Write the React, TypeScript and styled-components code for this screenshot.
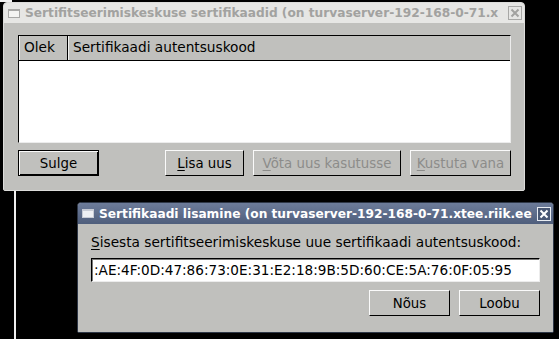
import React from "react";
import styled, { createGlobalStyle, css } from "styled-components";

const Global = createGlobalStyle`
  html, body { margin: 0; padding: 0; background: #000; }
  body { font-family: "DejaVu Sans", "Liberation Sans", sans-serif; }
`;

const GRAY = "#c0c0bd";

const Desktop = styled.div`
  position: relative;
  width: 559px;
  height: 339px;
  overflow: hidden;
  background: #000;
`;

const BackLine = styled.div`
  position: absolute;
  left: 14px;
  top: 191px;
  width: 2px;
  height: 148px;
  background: #f0f0f0;
`;

const Frame = styled.div<{ $active?: boolean; $x: number; $y: number; $w: number; $h: number }>`
  position: absolute;
  left: ${(p) => p.$x}px;
  top: ${(p) => p.$y}px;
  width: ${(p) => p.$w}px;
  height: ${(p) => p.$h}px;
  box-sizing: border-box;
  display: flex;
  flex-direction: column;
  border: 1px solid ${(p) => (p.$active ? "#2e3747" : "#dcdcda")};
  border-radius: 4px 4px 2px 2px;
  overflow: hidden;
  background: ${GRAY};
`;

const TitleBar = styled.div<{ $active?: boolean }>`
  height: ${(p) => (p.$active ? 21 : 20)}px;
  flex: none;
  display: flex;
  align-items: center;
  gap: 5px;
  padding: 0 2px 0 4px;
  ${(p) =>
    p.$active
      ? css`
          background: linear-gradient(#6d7c9a, #4f5e7c);
          color: #fff;
        `
      : css`
          background: #e6e6e4;
          color: #a2a2a0;
        `}
`;

const TitleIcon = styled.div<{ $active?: boolean }>`
  width: 12px;
  height: 9px;
  flex: none;
  box-sizing: border-box;
  border: 1px solid ${(p) => (p.$active ? "#c8ccd6" : "#a8a8a6")};
  border-top-width: 2px;
  background: ${(p) => (p.$active ? "#eef0f4" : "#f4f4f2")};
`;

const TitleText = styled.div`
  flex: 1;
  min-width: 0;
  white-space: nowrap;
  overflow: hidden;
  font-weight: bold;
  font-size: 12.2px;
  line-height: 20px;
`;

const CloseBox = styled.div<{ $active?: boolean }>`
  width: 14px;
  height: 14px;
  flex: none;
  box-sizing: border-box;
  display: flex;
  align-items: center;
  justify-content: center;
  border: 1px solid ${(p) => (p.$active ? "#e8ecf2" : "#a8a8a6")};
  background: ${(p) => (p.$active ? "#4a5874" : "transparent")};
`;

const Body = styled.div<{ $pad: string; $gap: number }>`
  flex: 1;
  display: flex;
  flex-direction: column;
  gap: ${(p) => p.$gap}px;
  padding: ${(p) => p.$pad};
  background: ${GRAY};
  color: #000;
  font-size: 13.7px;
`;

const Table = styled.div`
  height: 108px;
  box-sizing: border-box;
  background: #fff;
  border-style: solid;
  border-width: 1px;
  border-color: #000 #ececec #ececec #000;
  display: flex;
  flex-direction: column;
`;

const HeaderRow = styled.div`
  height: 24px;
  flex: none;
  display: flex;
  background: ${GRAY};
  border-bottom: 1px solid #000;
`;

const HeaderCell = styled.div<{ $w?: number }>`
  ${(p) => (p.$w ? `width: ${p.$w}px; flex: none;` : "flex: 1;")}
  box-sizing: border-box;
  padding-left: 4px;
  line-height: 23px;
  border-left: 1px solid #f2f2f0;
  border-right: 1px solid #000;
  white-space: nowrap;
  &:last-child { border-right: none; }
`;

const ButtonRow = styled.div<{ $end?: boolean }>`
  display: flex;
  gap: 9px;
  height: 26px;
  justify-content: ${(p) => (p.$end ? "flex-end" : "flex-start")};
`;

const Spacer = styled.div`
  flex: 1;
`;

const Button = styled.div<{ $w: number; $default?: boolean; $disabled?: boolean }>`
  width: ${(p) => p.$w}px;
  height: 26px;
  box-sizing: border-box;
  display: flex;
  align-items: center;
  justify-content: center;
  font-size: 13.33px;
  background: ${GRAY};
  color: ${(p) => (p.$disabled ? "#8c8c8a" : "#000")};
  border-style: solid;
  border-width: 1px;
  border-color: #fafafa #000 #000 #fafafa;
  ${(p) =>
    p.$default &&
    css`
      border-color: #000;
      box-shadow: inset 1px 1px 0 #fafafa, inset -1px -1px 0 #000;
    `}
  white-space: nowrap;
`;

const Mn = styled.span`
  text-decoration: underline;
  text-underline-offset: 2px;
`;

const Label = styled.div`
  height: 16px;
  line-height: 16px;
  white-space: nowrap;
  color: #000;
`;

const Input = styled.div`
  height: 24px;
  box-sizing: border-box;
  background: #fff;
  border-style: solid;
  border-width: 1px;
  border-color: #000 #ececec #ececec #000;
  box-shadow: inset 1px 1px 0 #7a7a78;
  padding-left: 2px;
  font-size: 13.6px;
  line-height: 22px;
  white-space: nowrap;
  overflow: hidden;
`;

const X = ({ color }: { color: string }) => (
  <svg width="10" height="10" viewBox="0 0 10 10">
    <path d="M1.5 1.5 L8.5 8.5 M8.5 1.5 L1.5 8.5" stroke={color} strokeWidth="2" />
  </svg>
);

const Corner = styled.div`
  position: absolute;
  left: 0;
  top: 0;
  width: 12px;
  height: 2px;
  background: #f0f0f0;
`;

export default function App() {
  return (
    <>
      <Global />
      <Desktop>
        <Corner />
        <BackLine />
        <Frame $x={3} $y={2} $w={522} $h={189}>
          <TitleBar>
            <TitleIcon />
            <TitleText>Sertifitseerimiskeskuse sertifikaadid (on turvaserver-192-168-0-71.x</TitleText>
            <CloseBox>
              <X color="#a2a2a0" />
            </CloseBox>
          </TitleBar>
          <Body $pad="12px 13px 13px 14px" $gap={7}>
            <Table>
              <HeaderRow>
                <HeaderCell $w={49}>Olek</HeaderCell>
                <HeaderCell>Sertifikaadi autentsuskood</HeaderCell>
              </HeaderRow>
            </Table>
            <ButtonRow>
              <Button $w={81} $default>
                Sulge
              </Button>
              <Spacer />
              <Button $w={79}>
                <span>
                  <Mn>L</Mn>isa uus
                </span>
              </Button>
              <Button $w={148} $disabled>
                <span>
                  <Mn>V</Mn>õta uus kasutusse
                </span>
              </Button>
              <Button $w={101} $disabled>
                <span>
                  <Mn>K</Mn>ustuta vana
                </span>
              </Button>
            </ButtonRow>
          </Body>
        </Frame>
        <Frame $active $x={77} $y={202} $w={477} $h={131}>
          <TitleBar $active>
            <TitleIcon $active />
            <TitleText>Sertifikaadi lisamine (on turvaserver-192-168-0-71.xtee.riik.ee</TitleText>
            <CloseBox $active>
              <X color="#fff" />
            </CloseBox>
          </TitleBar>
          <Body $pad="10px 13px 14px 13px" $gap={8}>
            <Label>
              <Mn>S</Mn>isesta sertifitseerimiskeskuse uue sertifikaadi autentsuskood:
            </Label>
            <Input>:AE:4F:0D:47:86:73:0E:31:E2:18:9B:5D:60:CE:5A:76:0F:05:95</Input>
            <ButtonRow $end>
              <Button $w={81}>Nõus</Button>
              <Button $w={81}>Loobu</Button>
            </ButtonRow>
          </Body>
        </Frame>
      </Desktop>
    </>
  );
}
